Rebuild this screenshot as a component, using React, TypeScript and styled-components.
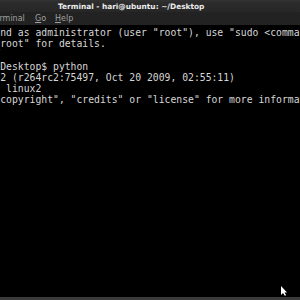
import React from "react";
import styled, { createGlobalStyle } from "styled-components";

const Global = createGlobalStyle`
  html, body { margin: 0; padding: 0; background: #000; }
  body { width: 300px; height: 300px; overflow: hidden; }
`;

const Window = styled.div`
  width: 300px;
  height: 300px;
  display: flex;
  flex-direction: column;
  background: #000;
  overflow: hidden;
  position: relative;
`;

const TitleBar = styled.div`
  height: 12px;
  flex: none;
  background: linear-gradient(#333 0px, #2b2b2b 3px, #272727 12px);
  display: flex;
  align-items: center;
  padding-left: 58px;
  font-family: "DejaVu Sans", sans-serif;
  font-weight: bold;
  font-size: 7.4px;
  color: #ececec;
  white-space: nowrap;
`;

const MenuBar = styled.div`
  height: 13px;
  flex: none;
  background: #222;
  display: flex;
  align-items: center;
  font-family: "DejaVu Sans", sans-serif;
  font-size: 8px;
  color: #a0a0a0;
  white-space: nowrap;
  margin-left: -9px;
`;

const MenuItem = styled.span<{ $w: number }>`
  display: inline-block;
  width: ${(p) => p.$w}px;
  u { text-decoration: underline; }
`;

const Screen = styled.div`
  flex: 1;
  background: #000;
  padding-top: 2px;
  font-family: "DejaVu Sans Mono", monospace;
  font-size: 9.75px;
  line-height: 11.2px;
  color: #d6d6d6;
  white-space: pre;
  margin-left: -82px;
`;

const Line = styled.div`
  height: 11.2px;
`;

const BottomEdge = styled.div`
  height: 3px;
  flex: none;
  background: #3a3a3a;
`;

const Cursor = styled.svg`
  position: absolute;
  left: 280px;
  top: 286px;
`;

const lines = [
  'To run a command as administrator (user "root"), use "sudo <command>".',
  'See "man sudo_root" for details.',
  "",
  "hari@ubuntu:~/Desktop$ python",
  "Python 2.6.4rc2 (r264rc2:75497, Oct 20 2009, 02:55:11) ",
  "[GCC 4.4.1] on linux2",
  'Type "help", "copyright", "credits" or "license" for more information.',
];

export default function App() {
  return (
    <Window>
      <Global />
      <TitleBar>Terminal - hari@ubuntu: ~/Desktop</TitleBar>
      <MenuBar>
        <MenuItem $w={44}>Terminal</MenuItem>
        <MenuItem $w={20}>
          <u>G</u>o
        </MenuItem>
        <MenuItem $w={30}>
          <u>H</u>elp
        </MenuItem>
      </MenuBar>
      <Screen>
        {lines.map((l, i) => (
          <Line key={i}>{l}</Line>
        ))}
      </Screen>
      <BottomEdge />
      <Cursor width="8" height="11" viewBox="0 0 8 11">
        <path d="M1 0 L1 9 L3 7 L5 10 L6 9 L4.5 6.5 L7 6.5 Z" fill="#fff" />
      </Cursor>
    </Window>
  );
}
